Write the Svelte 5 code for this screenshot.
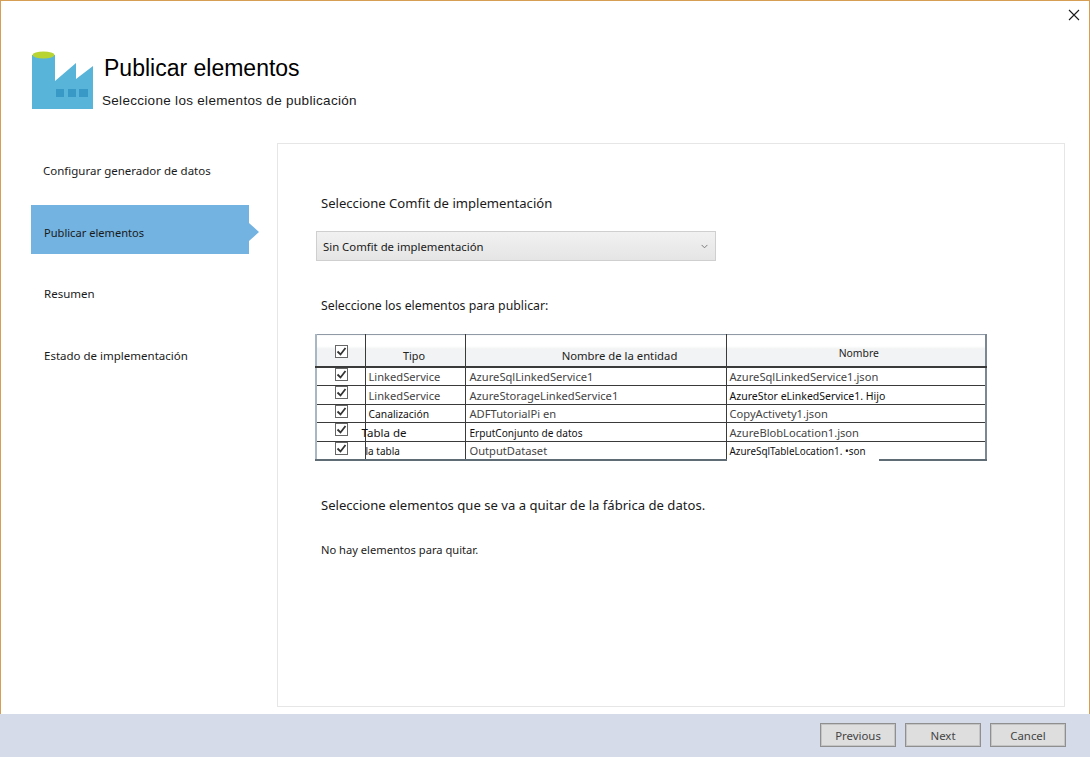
<script lang="ts">
	const steps = [
		{ label: 'Configurar generador de datos', active: false },
		{ label: 'Publicar elementos', active: true },
		{ label: 'Resumen', active: false },
		{ label: 'Estado de implementación', active: false }
	];

	const rows = [
		{ tipo: 'LinkedService', entidad: 'AzureSqlLinkedService1', nombre: 'AzureSqlLinkedService1.json' },
		{ tipo: 'LinkedService', entidad: 'AzureStorageLinkedService1', nombre: 'AzureStor eLinkedService1. Hijo', cls: 'wide' },
		{ tipo: 'Canalización', entidad: 'ADFTutorialPi en', nombre: 'CopyActivety1.json', tcls: 'canal' },
		{ tipo: 'Tabla de', entidad: 'ErputConjunto de datos', nombre: 'AzureBlobLocation1.json', tcls: 'out', ecls: 'small' },
		{ tipo: 'la tabla', entidad: 'OutputDataset', nombre: 'AzureSqlTableLocation1. •son', cls: 'last', tcls: 'lastt' }
	];
</script>

<div class="window">
	<button class="close" aria-label="Cerrar">
		<svg viewBox="0 0 12 12" width="12" height="12"><path d="M1 1l10 10M11 1L1 11" stroke="#1a1a1a" stroke-width="1.1" fill="none" /></svg>
	</button>

	<header class="head">
		<svg class="logo" viewBox="0 0 62 60" width="62" height="60" aria-hidden="true">
			<path d="M1 4h23v26L45 12v16L62 15v43H1z" fill="#59b4d9" />
			<ellipse cx="12.5" cy="4" rx="11" ry="3.4" fill="#b8d432" />
			<path d="M25 38h8v8h-8zM37 38h8v8h-8zM48 38h9v8h-9z" fill="#3999c6" />
		</svg>
		<div class="head-text">
			<h1 class="title">Publicar elementos</h1>
			<p class="subtitle">Seleccione los elementos de publicación</p>
		</div>
	</header>

	<div class="body">
		<nav class="steps">
			{#each steps as s}
				<div class="step" class:active={s.active}>{s.label}</div>
			{/each}
		</nav>

		<main class="panel">
			<h2 class="label first">Seleccione Comfit de implementación</h2>
			<div class="select">
				<span>Sin Comfit de implementación</span>
				<svg viewBox="0 0 8 5" width="7" height="5"><path d="M.7.7L4 4l3.3-3.3" stroke="#777" stroke-width="1.1" fill="none" /></svg>
			</div>

			<h2 class="label second">Seleccione los elementos para publicar:</h2>
			<table class="grid">
				<colgroup>
					<col class="c0" /><col class="c1" /><col class="c2" /><col class="c3" />
				</colgroup>
				<thead>
					<tr>
						<th class="th-check">
							<span class="check">
								<svg viewBox="0 0 13 13" width="13" height="13"><path d="M2.5 6.5l3 3 5-6.5" stroke="#333" stroke-width="1.8" fill="none" /></svg>
							</span>
						</th>
						<th class="th-type">Tipo</th>
						<th class="th-entity">Nombre de la entidad</th>
						<th class="th-name">Nombre</th>
					</tr>
				</thead>
				<tbody>
					{#each rows as r}
						<tr>
							<td class="cell-check">
								<span class="check">
									<svg viewBox="0 0 13 13" width="13" height="13"><path d="M2.5 6.5l3 3 5-6.5" stroke="#333" stroke-width="1.8" fill="none" /></svg>
								</span>
							</td>
							<td class={r.tcls}><span>{r.tipo}</span></td>
							<td class="cell-entity {r.ecls ?? ''}">{r.entidad}</td>
							<td class="cell-name {r.cls ?? ''}"><span>{r.nombre}</span></td>
						</tr>
					{/each}
				</tbody>
			</table>

			<h2 class="label third">Seleccione elementos que se va a quitar de la fábrica de datos.</h2>
			<p class="none">No hay elementos para quitar.</p>
		</main>
	</div>

	<footer class="foot">
		<button class="btn">Previous</button>
		<button class="btn">Next</button>
		<button class="btn">Cancel</button>
	</footer>
</div>

<style>
	:global(body) {
		margin: 0;
		background: #fff;
	}

	.window {
		position: relative;
		box-sizing: border-box;
		width: 1090px;
		height: 757px;
		display: flex;
		flex-direction: column;
		border: 1px solid #d69d55;
		border-bottom: 0;
		background: #fff;
		color: #1a1a1a;
		font-family: 'Noto Sans', sans-serif;
		font-size: 11.5px;
	}

	.close {
		position: absolute;
		top: 8px;
		right: 9px;
		width: 12px;
		height: 12px;
		padding: 0;
		border: 0;
		background: none;
		line-height: 0;
	}

	.head {
		height: 142px;
		box-sizing: border-box;
		padding: 50px 0 0 30px;
		display: flex;
		flex: none;
	}
	.logo {
		flex: none;
	}
	.head-text {
		margin-left: 9px;
	}
	.title {
		margin: 3px 0 0 2px;
		font: 400 23px/28px 'Liberation Sans', Arial, sans-serif;
		color: #000;
	}
	.subtitle {
		margin: 10px 0 0;
		font: 400 13.5px/18px 'Liberation Sans', Arial, sans-serif;
		letter-spacing: 0.3px;
	}

	.body {
		flex: 1;
		display: flex;
		min-height: 0;
	}

	.steps {
		width: 276px;
		flex: none;
		padding: 0 0 0 30px;
		box-sizing: border-box;
		display: flex;
		flex-direction: column;
		gap: 12.5px;
	}
	.step {
		position: relative;
		width: 218px;
		height: 49px;
		box-sizing: border-box;
		padding: 6px 0 0 13px;
		display: flex;
		align-items: center;
	}
	.step:first-child {
		padding-left: 12px;
	}
	.step.active {
		background: #72b3e1;
		font-size: 11.1px;
	}
	.step.active::after {
		content: '';
		position: absolute;
		left: 100%;
		top: 18px;
		border-left: 10px solid #72b3e1;
		border-top: 9px solid transparent;
		border-bottom: 9px solid transparent;
	}

	.panel {
		width: 788px;
		height: 564px;
		box-sizing: border-box;
		border: 1px solid #e6e6e6;
		padding: 0 0 0 38px;
	}

	.label {
		margin: 0;
		font: 400 13.1px/18px 'Noto Sans', sans-serif;
		color: #1a1a1a;
	}
	.label.first {
		margin: 50px 0 0 5px;
	}
	.label.second {
		margin: 36px 0 0 5px;
		font-size: 12.3px;
	}
	.label.third {
		margin: 35px 0 0 5px;
	}

	.select {
		margin-top: 19px;
		width: 400px;
		height: 30px;
		box-sizing: border-box;
		border: 1px solid #cfcfcf;
		background: linear-gradient(#f1f1f1, #e5e5e5);
		padding: 0 7px 0 6px;
		display: flex;
		align-items: center;
		justify-content: space-between;
		font-size: 11.35px;
	}

	.grid {
		margin: 19px 0 0 -1px;
		width: 672px;
		table-layout: fixed;
		border-collapse: collapse;
		font-size: 11.15px;
		color: #444;
		border-top: 1px solid #8f9aa6;
		border-left: 2px solid #a9b6c4;
		border-right: 2px solid #7b8792;
		border-bottom: 2px solid #5f6b75;
	}
	.c0 {
		width: 49px;
	}
	.c1 {
		width: 100px;
	}
	.c2 {
		width: 261px;
	}
	th {
		height: 21px;
		padding: 10px 0 0;
		font-weight: 400;
		font-size: 11.3px;
		color: #222;
		background: linear-gradient(#fff 35%, #f2f3f4 42%);
		border-right: 1px solid #3a3a3a;
		border-bottom: 2px solid #3a3a3a;
		text-align: center;
	}
	.th-check {
		height: 27px;
		padding: 4px 0 0 1px;
	}
	.th-type {
		font-size: 10.8px;
		padding-right: 2px;
	}
	.th-entity {
		padding-left: 48px;
	}
	.th-name {
		height: 27px;
		padding: 4px 0 0 6px;
		font-size: 10.4px;
	}
	th:last-child,
	td:last-child {
		border-right: 0;
	}
	td {
		height: 16px;
		padding: 1px 0 0 3px;
		white-space: nowrap;
		line-height: 16px;
		border-right: 1px solid #3a3a3a;
		border-bottom: 1px solid #3a3a3a;
		overflow: visible;
	}
	tr:nth-child(even) td {
		height: 17px;
	}
	td.cell-check {
		padding: 0 0 0 1px;
		text-align: center;
		vertical-align: top;
	}
	.check {
		display: inline-block;
		width: 13px;
		height: 13px;
		box-sizing: border-box;
		border: 1px solid #666;
		background: #fff;
		vertical-align: top;
		line-height: 0;
	}
	.check svg {
		margin: -1px;
	}
	td.cell-entity {
		padding-left: 4px;
	}
	td.small {
		font-size: 10.1px;
		color: #111;
	}
	td.canal {
		font-size: 10.3px;
		color: #111;
	}
	td.out span {
		margin-left: -7px;
		font-size: 11.5px;
		color: #111;
	}
	td.lastt span {
		margin-left: -3px;
		font-size: 10px;
		color: #111;
	}
	td.cell-name {
		padding-left: 3px;
	}
	.cell-name.wide span,
	.cell-name.last span {
		position: relative;
		display: block;
		color: #111;
		background: #fff;
	}
	.cell-name.wide span {
		width: 174px;
		font-size: 10.5px;
	}
	.cell-name.last span {
		width: 149px;
		height: 16px;
		padding: 0 0 2px 3px;
		margin: 0 0 -2px -3px;
		font-size: 9.9px;
	}

	.none {
		margin: 28px 0 0 5px;
		font-size: 11.15px;
		line-height: 16px;
		color: #222;
	}

	.foot {
		flex: none;
		box-sizing: border-box;
		height: 43px;
		margin: 7px -1px 0;
		background: #d6dbe9;
		display: flex;
		justify-content: flex-end;
		align-items: flex-start;
		gap: 9px;
		padding: 9px 24px 0 0;
	}
	.btn {
		width: 76px;
		height: 24px;
		box-sizing: border-box;
		padding: 0;
		border: 1px solid #8f8f8f;
		background: #dedede;
		box-shadow: inset 0 0 0 1px #c4c4c4;
		color: #444;
		font: 400 11.4px 'Noto Sans', sans-serif;
	}
</style>
